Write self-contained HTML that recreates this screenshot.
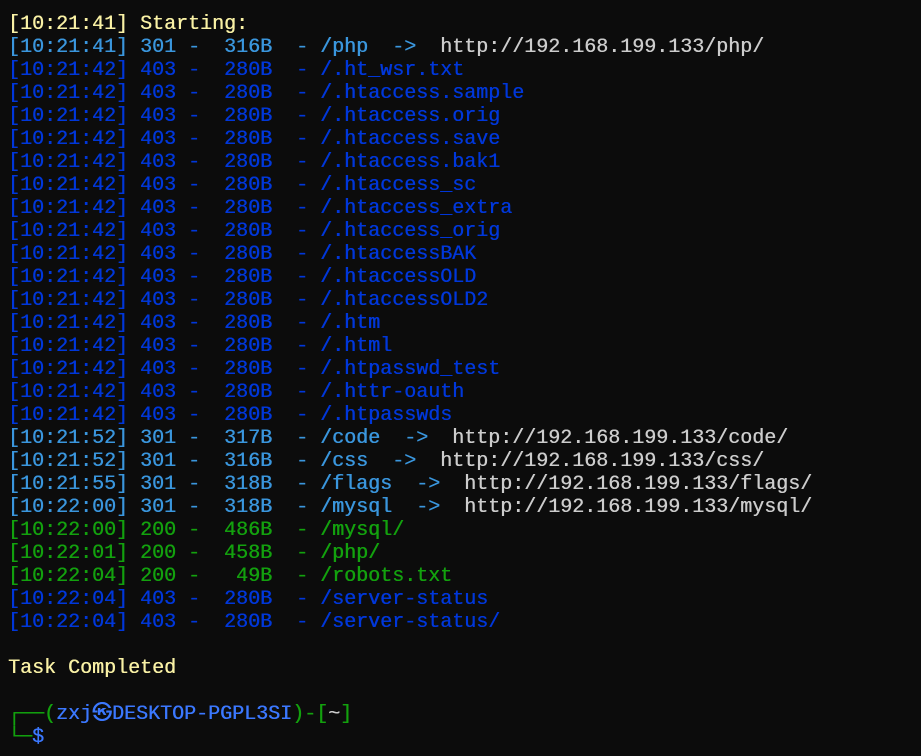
<!DOCTYPE html>
<html><head><meta charset="utf-8"><style>
html,body{margin:0;padding:0;background:#0c0c0c;width:921px;height:756px;overflow:hidden}
pre{margin:0;position:absolute;left:8px;top:13px;font-family:"Liberation Mono","DejaVu Sans Mono","Noto Sans CJK SC",monospace;font-size:20px;line-height:23px;color:#cccccc;text-shadow:0.4px 0 0 currentColor}
.y{color:#f9f1a5}.c{color:#3a96dd}.b{color:#0037da}.g{color:#13a10e}.p{color:#3b78ff}.w{color:#cccccc}
</style></head><body><pre><span class="y">[10:21:41] Starting:</span>
<span class="c">[10:21:41] 301 -  316B  - /php  -&gt;  </span><span class="w">http://192.168.199.133/php/</span>
<span class="b">[10:21:42] 403 -  280B  - /.ht_wsr.txt
[10:21:42] 403 -  280B  - /.htaccess.sample
[10:21:42] 403 -  280B  - /.htaccess.orig
[10:21:42] 403 -  280B  - /.htaccess.save
[10:21:42] 403 -  280B  - /.htaccess.bak1
[10:21:42] 403 -  280B  - /.htaccess_sc
[10:21:42] 403 -  280B  - /.htaccess_extra
[10:21:42] 403 -  280B  - /.htaccess_orig
[10:21:42] 403 -  280B  - /.htaccessBAK
[10:21:42] 403 -  280B  - /.htaccessOLD
[10:21:42] 403 -  280B  - /.htaccessOLD2
[10:21:42] 403 -  280B  - /.htm
[10:21:42] 403 -  280B  - /.html
[10:21:42] 403 -  280B  - /.htpasswd_test
[10:21:42] 403 -  280B  - /.httr-oauth
[10:21:42] 403 -  280B  - /.htpasswds</span>
<span class="c">[10:21:52] 301 -  317B  - /code  -&gt;  </span><span class="w">http://192.168.199.133/code/</span>
<span class="c">[10:21:52] 301 -  316B  - /css  -&gt;  </span><span class="w">http://192.168.199.133/css/</span>
<span class="c">[10:21:55] 301 -  318B  - /flags  -&gt;  </span><span class="w">http://192.168.199.133/flags/</span>
<span class="c">[10:22:00] 301 -  318B  - /mysql  -&gt;  </span><span class="w">http://192.168.199.133/mysql/</span>
<span class="g">[10:22:00] 200 -  486B  - /mysql/
[10:22:01] 200 -  458B  - /php/
[10:22:04] 200 -   49B  - /robots.txt</span>
<span class="b">[10:22:04] 403 -  280B  - /server-status
[10:22:04] 403 -  280B  - /server-status/</span>

<span class="y">Task Completed</span>

<span class="g">┌──(</span><span class="p">zxj㉿DESKTOP-PGPL3SI</span><span class="g">)-[</span><span class="w">~</span><span class="g">]</span>
<span class="g">└─</span><span class="p">$</span></pre></body></html>
